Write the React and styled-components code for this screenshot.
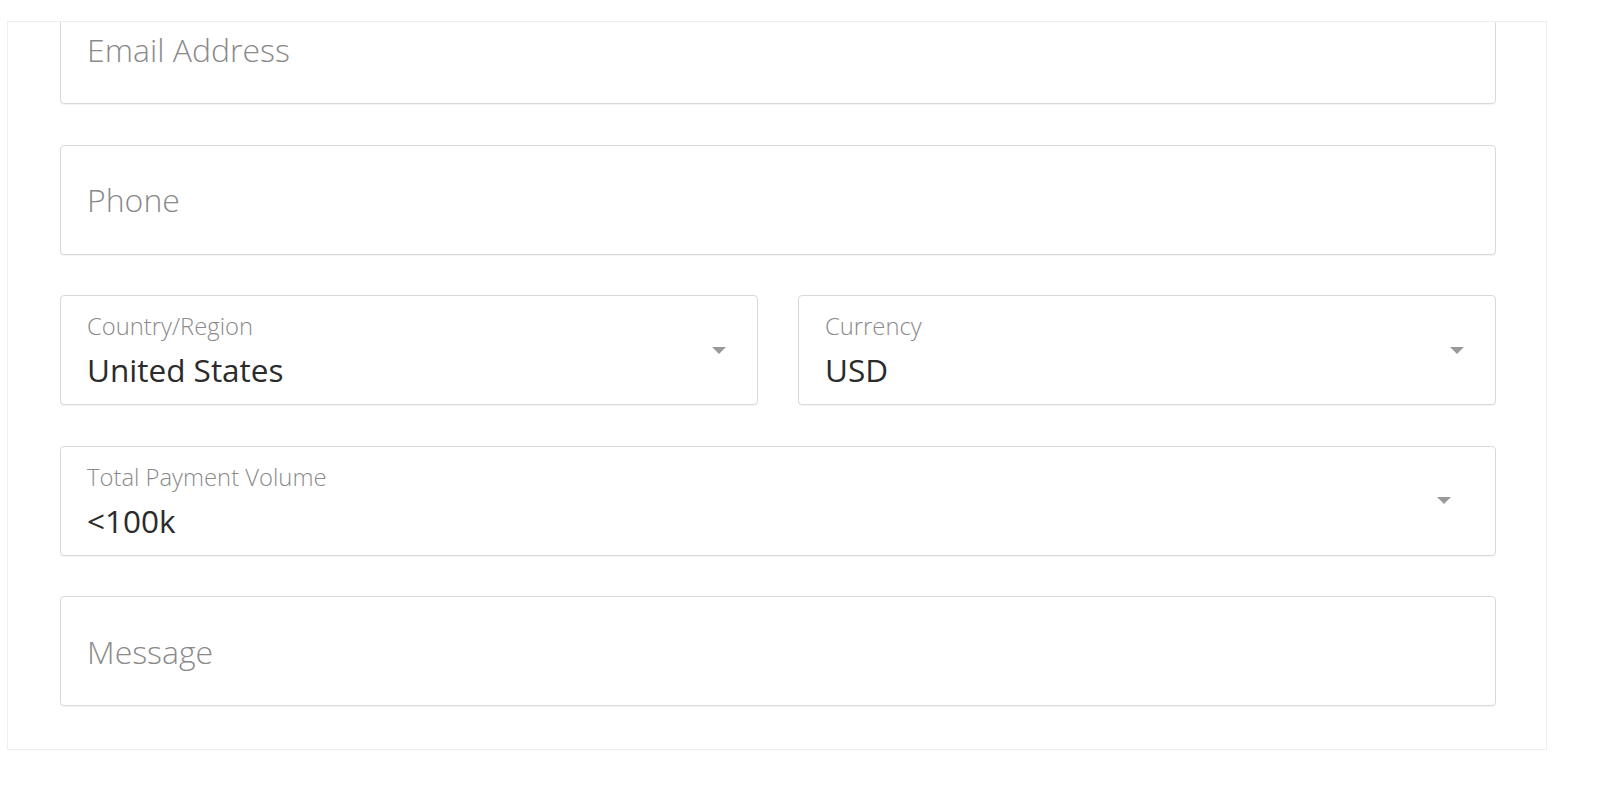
import React from "react";
import styled, { createGlobalStyle } from "styled-components";

const GlobalStyle = createGlobalStyle`
  body {
    margin: 0;
    background: #fff;
    font-family: 'Open Sans', 'Liberation Sans', sans-serif;
  }
`;

const Page = styled.div`
  padding: 21px 0 0 7px;
`;

const Card = styled.div`
  width: 1540px;
  box-sizing: border-box;
  padding: 0 50px 43px 52px;
  background: #fff;
  border: 1px solid #efefef;
  overflow: hidden;
`;

// the form is scrolled a little, so the first field starts above the card edge
const Form = styled.div`
  display: flex;
  flex-direction: column;
  gap: 40.5px;
  margin-top: -28px;
`;

const Row = styled.div`
  display: grid;
  grid-template-columns: 1fr 1fr;
  gap: 40px;
`;

const Field = styled.div`
  height: 110px;
  box-sizing: border-box;
  border: 1px solid #d9d9d9;
  border-radius: 4px;
  box-shadow: 0 1px 1px rgba(0, 0, 0, 0.05);
  background: #fff;
  display: flex;
  align-items: center;
  padding: 0 ${(p) => p.$inset || 31}px 0 26px;
`;

const Placeholder = styled.span`
  font-size: 32px;
  font-weight: 300;
  color: #8a8a8a;
`;

const SelectBody = styled.div`
  flex: 1;
  display: flex;
  flex-direction: column;
  align-self: flex-start;
  padding-top: 16px;
`;

const Label = styled.span`
  font-size: 23.8px;
  line-height: 28px;
  font-weight: 300;
  color: #8a8a8a;
`;

const Value = styled.span`
  margin-top: 12px;
  font-size: 31.5px;
  line-height: 36px;
  font-weight: 400;
  color: #2b2b2b;
`;

const Caret = styled.span`
  width: 0;
  height: 0;
  border-left: 7px solid transparent;
  border-right: 7px solid transparent;
  border-top: 7px solid #9a9a9a;
`;

const Input = ({ placeholder }) => (
  <Field>
    <Placeholder>{placeholder}</Placeholder>
  </Field>
);

const Select = ({ label, value, inset }) => (
  <Field $inset={inset}>
    <SelectBody>
      <Label>{label}</Label>
      <Value>{value}</Value>
    </SelectBody>
    <Caret />
  </Field>
);

const App = () => (
  <>
    <GlobalStyle />
    <Page>
      <Card>
        <Form>
          <Input placeholder="Email Address" />
          <Input placeholder="Phone" />
          <Row>
            <Select label="Country/Region" value="United States" />
            <Select label="Currency" value="USD" />
          </Row>
          <Select label="Total Payment Volume" value="<100k" inset={44} />
          <Input placeholder="Message" />
        </Form>
      </Card>
    </Page>
  </>
);

export default App;
